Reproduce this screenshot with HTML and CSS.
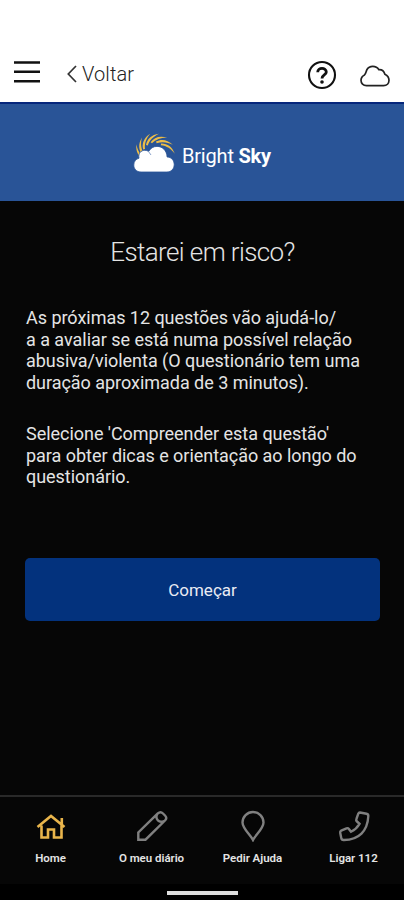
FILE: index.html
```html
<!DOCTYPE html>
<html lang="pt">
<head>
<meta charset="utf-8">
<meta name="viewport" content="width=device-width, initial-scale=1">
<title>Bright Sky</title>
<link rel="stylesheet" href="styles.css">
</head>
<body>
<div class="app">
  <header class="topbar">
    <svg class="menu" viewBox="0 0 26 24" width="26" height="24"><path d="M0 2.5H26M0 11.8H26M0 21.2H26"/></svg>
    <a class="back"><svg viewBox="0 0 10 18" width="10" height="18"><path d="M9 1L1.3 9L9 17"/></svg><span>Voltar</span></a>
    <svg class="help" viewBox="0 0 30 30" width="30" height="30"><circle cx="15" cy="15" r="13"/><path d="M10.7 12.3C10.7 7.1 19.3 7.3 19.3 12C19.3 15.2 15 14.8 15 18.5"/><circle class="dot" cx="15" cy="22" r="1.8"/></svg>
    <svg class="cloud" viewBox="0 0 30 22" width="30" height="22"><path d="M6.500 20.700C3.200 20.700 1 18.300 1 15.300C1 12.500 2.500 10.900 4.500 9.900C6 8.500 6 6.300 7 4.500C8.200 2.300 10.500 1.300 12.800 1.300C15.600 1.300 17.500 2.400 18.800 4.600C21.800 4.300 24 6.200 24.900 9.200C27.500 10.500 29 12.500 29 15.300C29 18.300 26.800 20.700 23.500 20.700Z"/></svg>
  </header>
  <div class="brand">
    <svg class="logo" viewBox="0 0 42 44" width="42" height="44">
      <defs><path id="ray" d="M-8.500 -8.500C-7.500 -14.500 -3 -18.800 4.500 -19.800C-1 -17.300 -5 -13.500 -6.700 -8Z"/></defs>
      <g class="rays" transform="translate(21.500 23.500)">
        <use href="#ray" transform="rotate(-76)"/><use href="#ray" transform="rotate(-51)"/><use href="#ray" transform="rotate(-25)"/><use href="#ray"/><use href="#ray" transform="rotate(26)"/><use href="#ray" transform="rotate(52)"/><use href="#ray" transform="rotate(78)"/>
      </g>
      <path class="puff" d="M8 42C3.500 42 .8 38.900 .8 35C.8 31.500 3 28.900 6 28.200C5 23.500 8 20.300 11.800 20.300C13.200 20.300 14.500 20.700 15.700 21.500C17.300 18.300 20.400 16.400 24 16.400C29.500 16.400 33.800 20.500 34.100 27C38.300 27 41.200 30.500 41.200 34.500C41.200 38.800 38.200 42 34 42Z"/>
      <path class="crease" d="M15.500 21.500L18 25"/>
    </svg>
    <span class="name">Bright <b>Sky</b></span>
  </div>
  <main>
    <h1>Estarei em risco?</h1>
    <p>As próximas 12 questões vão ajudá-lo/<br>a a avaliar se está numa possível relação<br>abusiva/violenta (O questionário tem uma<br>duração aproximada de 3 minutos).</p>
    <p>Selecione 'Compreender esta questão'<br>para obter dicas e orientação ao longo do<br>questionário.</p>
    <button>Começar</button>
  </main>
  <nav>
    <a class="active"><svg viewBox="0 0 32 32" width="32" height="32"><path d="M2.500 17L16 6L29.500 17M26.800 14.500V8M6.500 15.500V27.500H13V19.500H19V27.500H26.500V15.500"/></svg><span>Home</span></a>
    <a><svg viewBox="0 0 32 32" width="32" height="32"><path d="M2.300 29.700V22.500L21.800 3.500C23.500 2 25.500 2 27 3.500L29 5.500C30.500 7 30.500 9 29 10.500L9.500 29.700ZM21 4.500C19 9 23 13.500 28 11"/></svg><span>O meu diário</span></a>
    <a><svg viewBox="0 0 32 32" width="32" height="32"><path d="M16 30C13.500 25 5.500 18.500 5.500 12.500A10.500 10.500 0 0 1 26.500 12.500C26.500 18.500 18.500 25 16 30Z"/></svg><span>Pedir Ajuda</span></a>
    <a><svg viewBox="0 0 32 32" width="32" height="32"><path d="M22 2.500L28.500 3.800C30 4.100 30.500 4.800 30.300 6.300C29.500 21 21 29.800 6 30C4.500 30.100 3.500 29.700 3.300 28.200L2.200 22.800C2 21.800 2.300 21.100 3.200 20.600L8.500 18.300C9.500 17.900 10.300 18.200 10.900 19L13 21.800C17 19.800 19.500 17.300 21.500 13.800L19 11.500C18.200 10.800 18 10 18.400 9L20.300 3.700C20.700 2.700 21.200 2.400 22 2.500Z"/></svg><span>Ligar 112</span></a>
  </nav>
  <footer><i></i></footer>
</div>
</body>
</html>
```
FILE: styles.css
```css
* { box-sizing: border-box; }
body { margin: 0; font-family: Roboto, "Liberation Sans", sans-serif; }
svg { display: block; fill: none; flex: none; }
.app { width: 404px; height: 900px; display: flex; flex-direction: column; background: #060606; color: #e4e4e4; }
.topbar { height: 102px; padding: 48px 14px 0; display: flex; align-items: center; background: #fff; }
.menu { stroke: #111; stroke-width: 2.4; margin-bottom: 7px; }
.back { display: flex; align-items: center; gap: 5px; margin-left: 27px; margin-bottom: 2px; color: #222; font-size: 20px; font-weight: 300; letter-spacing: .1px; }
.back svg { stroke: #333; stroke-width: 1.7; }
.help { margin-left: auto; stroke: #111; stroke-width: 2.1; }
.help path { stroke-width: 2.8; }
.help .dot { fill: #111; stroke: none; }
.cloud { margin-left: 23px; margin-top: 2px; stroke: #222; stroke-width: 1.7; }
.brand { height: 99px; border-top: 2px solid #06277c; background: #295497; display: flex; justify-content: center; align-items: center; gap: 7px; color: #fff; }
.logo { margin-bottom: 2px; }
.rays { fill: #edbd47; }
.puff { fill: #fff; stroke: #295497; stroke-width: .8; }
.crease { stroke: #8aa3cb; stroke-width: 1; }
.name { font-size: 20px; font-weight: 400; letter-spacing: -.2px; padding-top: 6px; white-space: nowrap; }
.name b { font-weight: 700; }
main { flex: 1; padding: 34px 25px 0; }
h1 { margin: 0 0 38px; padding-left: 1px; font-size: 26px; line-height: 34px; font-weight: 300; letter-spacing: -.6px; text-align: center; white-space: nowrap; }
p { margin: 0 0 30px 1px; font-size: 18px; line-height: 21.5px; letter-spacing: -.035px; white-space: nowrap; }
button { display: block; width: 355px; height: 63px; margin-top: 70px; padding: 2px 0 0; border: 0; border-radius: 5px; background: #03327d; color: #e9ebf3; font: 400 17px Roboto, sans-serif; }
nav { height: 89px; border-top: 2px solid #292929; display: grid; grid-template-columns: repeat(4, 1fr); padding-top: 13px; }
nav a { display: flex; flex-direction: column; align-items: center; gap: 9px; font-size: 11.5px; line-height: 15px; font-weight: 600; letter-spacing: -.03px; color: #e4e4e4; white-space: nowrap; }
nav svg { stroke: #808080; stroke-width: 2.4; }
nav .active svg { stroke: #e9b54b; stroke-width: 2.6; }
footer { height: 16px; display: flex; justify-content: center; padding-top: 7px; background: #000; }
footer i { width: 71px; height: 4px; background: #dedede; }
```
